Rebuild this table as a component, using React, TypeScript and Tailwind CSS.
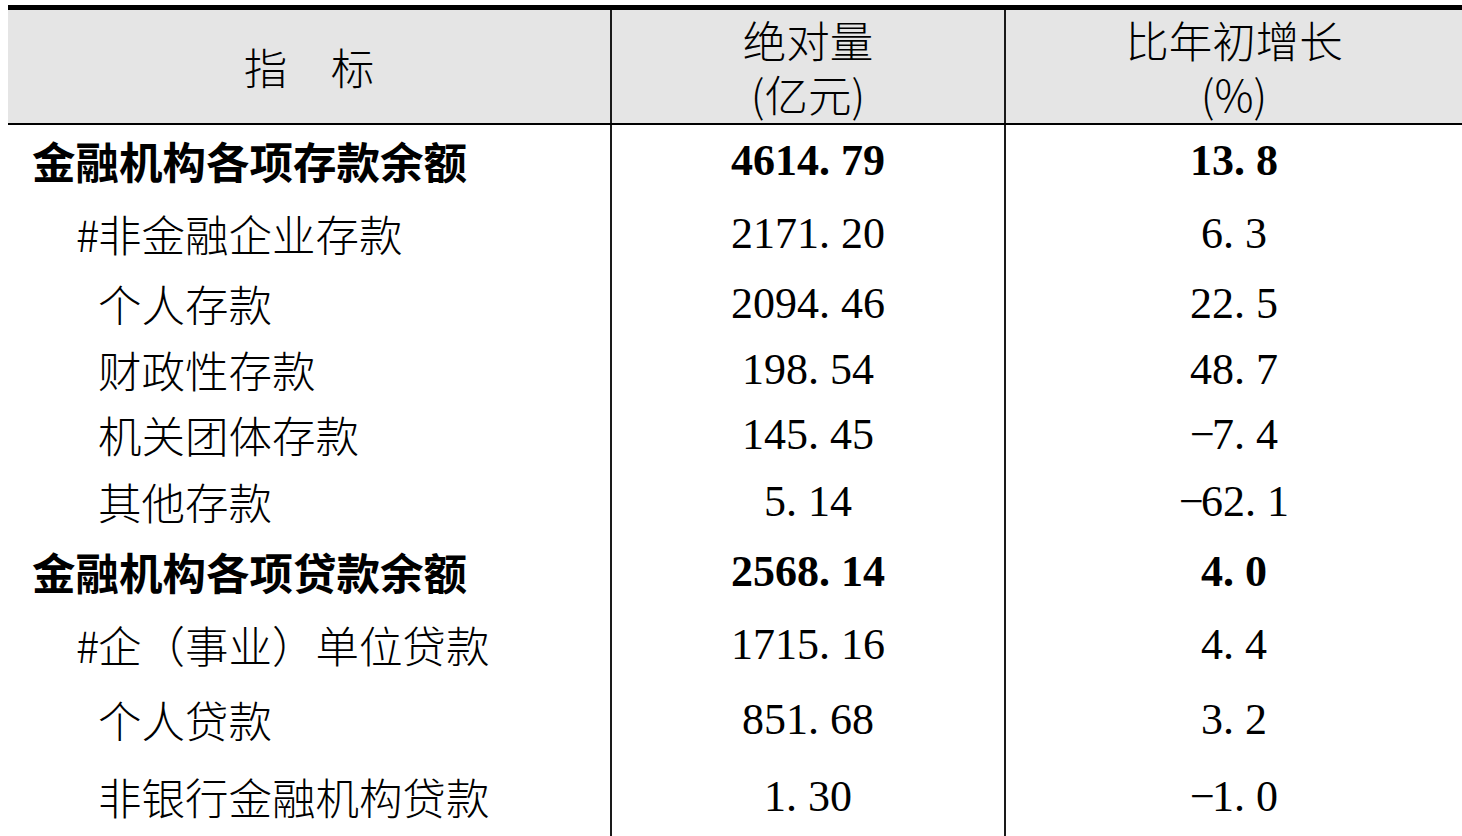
import React from "react";

type Row = {
  label: string;
  hash?: boolean;
  bold?: boolean;
  amount: string;
  growth: string;
  h: string;
};

// row heights picked so the text centres line up with the reference
const rows: Row[] = [
  { label: "金融机构各项存款余额", bold: true, amount: "4614.79", growth: "13.8", h: "h-[72px]" },
  { label: "非金融企业存款", hash: true, amount: "2171.20", growth: "6.3", h: "h-[73px]" },
  { label: "个人存款", amount: "2094.46", growth: "22.5", h: "h-[67px]" },
  { label: "财政性存款", amount: "198.54", growth: "48.7", h: "h-[65px]" },
  { label: "机关团体存款", amount: "145.45", growth: "-7.4", h: "h-[66px]" },
  { label: "其他存款", amount: "5.14", growth: "-62.1", h: "h-[68px]" },
  { label: "金融机构各项贷款余额", bold: true, amount: "2568.14", growth: "4.0", h: "h-[71px]" },
  { label: "企（事业）单位贷款", hash: true, amount: "1715.16", growth: "4.4", h: "h-[75px]" },
  { label: "个人贷款", amount: "851.68", growth: "3.2", h: "h-[75px]" },
  { label: "非银行金融机构贷款", amount: "1.30", growth: "-1.0", h: "h-[79px]" },
];

const cjk = "font-['Noto_Sans_CJK_SC',sans-serif]";
const serif = "font-['Liberation_Serif','Noto_Sans_CJK_SC',serif]";

// half-width slots like the Song typeface: every char takes 22px
function Num({ value, bold }: { value: string; bold?: boolean }) {
  return (
    <span className={`${serif} text-[44px] leading-none ${bold ? "font-bold" : "font-normal"}`}>
      {value.split("").map((ch, i) => {
        if (ch === ".") {
          return (
            <span key={i} className="inline-block w-[22px] text-left">
              .
            </span>
          );
        }
        if (ch === "-") {
          return (
            <span key={i} className="inline-block w-[22px] text-center">
              −
            </span>
          );
        }
        return <span key={i}>{ch}</span>;
      })}
    </span>
  );
}

export default function App() {
  return (
    <div className="w-[1462px] h-[836px] overflow-hidden bg-white pt-[5px] pl-[8px] text-black">
      {/* header */}
      <div className="grid grid-cols-[602px_394px_1fr] border-t-[5px] border-b-2 border-black bg-[#e5e5e5] h-[120px]">
        <div className={`${cjk} font-light text-[43.5px] leading-none flex items-center justify-center`}>
          指　标
        </div>
        <div className={`${cjk} font-light text-[43.5px] leading-none border-l-2 border-[#1a1a1a] flex flex-col items-center justify-center gap-[11px]`}>
          <span>绝对量</span>
          <span>(亿元)</span>
        </div>
        <div className={`${cjk} font-light text-[43.5px] leading-none border-l-2 border-[#1a1a1a] flex flex-col items-center justify-center gap-[11px]`}>
          <span>比年初增长</span>
          <span>(%)</span>
        </div>
      </div>

      {/* body */}
      {rows.map((r) => (
        <div key={r.label} className={`grid grid-cols-[602px_394px_1fr] ${r.h}`}>
          <div
            className={`${cjk} text-[43.5px] leading-none flex items-center ${
              r.bold ? "font-bold pl-[24px]" : "font-light pl-[90px]"
            }`}
          >
            <span className="whitespace-nowrap">
              {r.hash && <span className="inline-block w-[22px] -ml-[22px]">#</span>}
              {r.label}
            </span>
          </div>
          <div className="border-l-2 border-[#1a1a1a] flex items-center justify-center">
            <Num value={r.amount} bold={r.bold} />
          </div>
          <div className="border-l-2 border-[#1a1a1a] flex items-center justify-center">
            <Num value={r.growth} bold={r.bold} />
          </div>
        </div>
      ))}
    </div>
  );
}
